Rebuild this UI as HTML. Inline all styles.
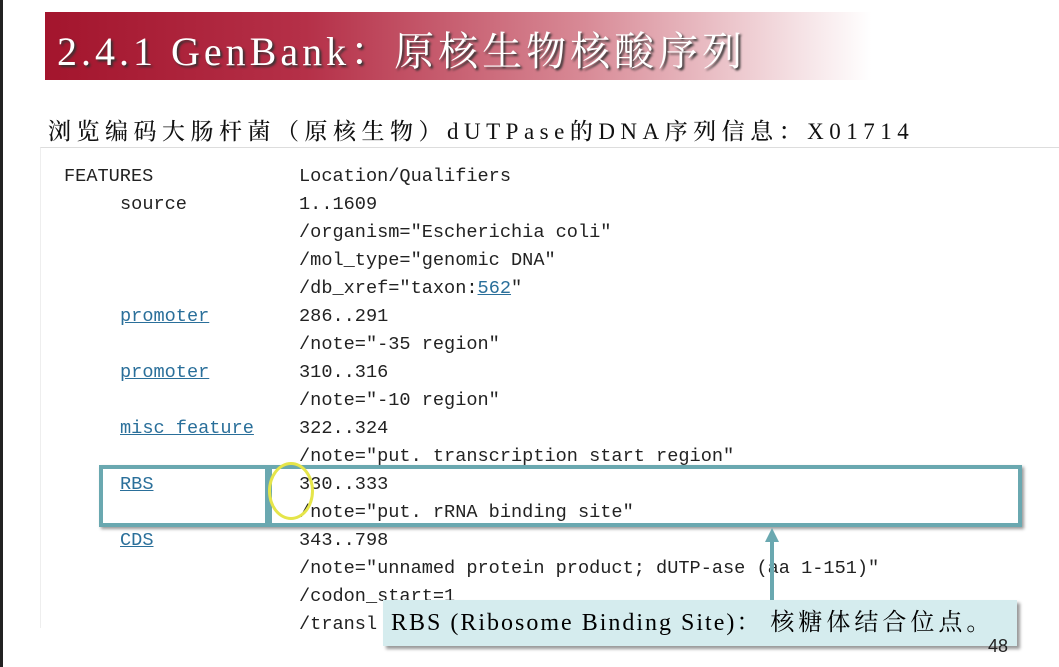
<!DOCTYPE html>
<html><head><meta charset="utf-8"><style>
body{margin:0;width:1059px;height:667px;background:#fff;position:relative;overflow:hidden;font-family:"Liberation Serif","Noto Serif CJK SC",serif}
.band{position:absolute;left:45px;top:12px;width:870px;height:68px;background:linear-gradient(90deg,#a3152d 0%,#b53048 30%,#d88a96 62%,#fff 95%)}
.title{position:absolute;left:57px;top:20px;font-size:40px;color:#fff;text-shadow:2px 2px 2px #333;white-space:nowrap;letter-spacing:4px}
.sub{position:absolute;left:48px;top:113px;font-size:23px;color:#111;white-space:nowrap;letter-spacing:5.5px;font-weight:500}
.box{position:absolute;left:40px;top:147px;width:1019px;height:480px;border-top:1px solid #ddd;border-left:1px solid #eee}
.m{position:absolute;font-family:"Liberation Mono",monospace;font-size:18.6px;color:#222;white-space:pre;line-height:20px;margin-top:2px}
.a{color:#2a6f9a;text-decoration:underline}
.rbs{position:absolute;left:99px;top:465px;width:915px;height:54px;border:4px solid #6aa8b0;box-shadow:2px 2px 3px #999}
.div{position:absolute;left:265px;top:469px;width:7px;height:54px;background:#6aa8b0}
.call{position:absolute;left:383px;top:600px;width:634px;height:46px;background:#d5ecee;box-shadow:3px 3px 3px #999;font-size:24px;line-height:46px;padding-left:8px;box-sizing:border-box;white-space:nowrap;letter-spacing:2px}
.call span{letter-spacing:4px}
.arr{position:absolute;left:770px;top:540px;width:4px;height:60px;background:#6aa8b0}
.ah{position:absolute;left:765px;top:528px;width:0;height:0;border-left:7px solid transparent;border-right:7px solid transparent;border-bottom:14px solid #6aa8b0}
</style></head><body>
<div style="position:absolute;left:0;top:0;width:3px;height:667px;background:#222"></div>
<div class="band"></div>
<div class="title">2.4.1 GenBank：原核生物核酸序列</div>
<div class="sub">浏览编码大肠杆菌（原核生物）dUTPase的DNA序列信息：X01714</div>
<div class="box"></div>
<div class="m" style="left:64px;top:165px">FEATURES</div>
<div class="m" style="left:299px;top:165px">Location/Qualifiers</div>
<div class="m" style="left:120px;top:193px">source</div>
<div class="m" style="left:299px;top:193px">1..1609</div>
<div class="m" style="left:299px;top:221px">/organism="Escherichia coli"</div>
<div class="m" style="left:299px;top:249px">/mol_type="genomic DNA"</div>
<div class="m" style="left:299px;top:277px">/db_xref="taxon:<span class="a">562</span>"</div>
<div class="m a" style="left:120px;top:305px">promoter</div>
<div class="m" style="left:299px;top:305px">286..291</div>
<div class="m" style="left:299px;top:333px">/note="-35 region"</div>
<div class="m a" style="left:120px;top:361px">promoter</div>
<div class="m" style="left:299px;top:361px">310..316</div>
<div class="m" style="left:299px;top:389px">/note="-10 region"</div>
<div class="m a" style="left:120px;top:417px">misc_feature</div>
<div class="m" style="left:299px;top:417px">322..324</div>
<div class="m" style="left:299px;top:445px">/note="put. transcription start region"</div>
<div class="m a" style="left:120px;top:473px">RBS</div>
<div class="m" style="left:299px;top:473px">330..333</div>
<div class="m" style="left:299px;top:501px">/note="put. rRNA binding site"</div>
<div class="m a" style="left:120px;top:529px">CDS</div>
<div class="m" style="left:299px;top:529px">343..798</div>
<div class="m" style="left:299px;top:557px">/note="unnamed protein product; dUTP-ase (aa 1-151)"</div>
<div class="m" style="left:299px;top:585px">/codon_start=1</div>
<div class="m" style="left:299px;top:613px">/transl</div>
<div class="rbs"></div><div class="div"></div>
<div style="position:absolute;left:268px;top:462px;width:40px;height:52px;border:3px solid #e5e54a;border-radius:50%"></div>
<div class="ah"></div><div class="arr"></div>
<div class="call">RBS (Ribosome Binding Site)： <span>核糖体结合位点。</span></div>
<div style="position:absolute;left:988px;top:636px;font-family:'Liberation Sans',sans-serif;font-size:18px;color:#222">48</div>
</body></html>
